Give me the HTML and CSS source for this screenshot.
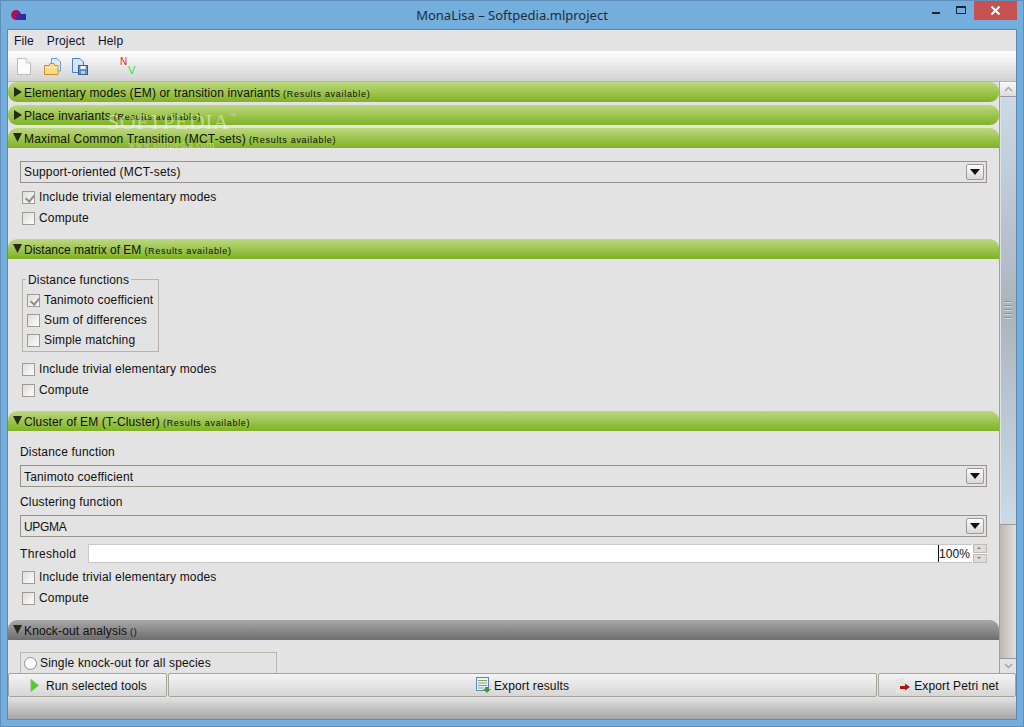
FILE: index.html
```html
<!DOCTYPE html>
<html lang="en">
<head>
<meta charset="utf-8">
<title>MonaLisa – Softpedia.mlproject</title>
<link rel="stylesheet" href="styles.css">
</head>
<body>
<div class="window">
  <header class="titlebar">
    <svg class="app-icon" width="16" height="12" viewBox="0 0 16 12"><defs><linearGradient id="lg1" x1="0" x2="1"><stop offset="0" stop-color="#c01050"/><stop offset="1" stop-color="#901060"/></linearGradient><linearGradient id="lg2" x1="0" x2="1"><stop offset="0" stop-color="#602090"/><stop offset="1" stop-color="#1830a8"/></linearGradient></defs><circle cx="5" cy="5" r="5" fill="url(#lg1)"/><rect x="5" y="4" width="10" height="6" fill="url(#lg2)"/></svg>
    <div class="title">MonaLisa – Softpedia.mlproject</div>
    <div class="controls">
      <div class="ctl"><span class="min"></span></div>
      <div class="ctl"><span class="max"></span></div>
      <div class="close"><svg width="11" height="9" viewBox="0 0 11 9"><path d="M1.500 .5l8 8M9.500 .5l-8 8" stroke="#fff" stroke-width="2"/></svg></div>
    </div>
  </header>
  <div class="client">
    <nav class="menubar"><span>File</span><span>Project</span><span>Help</span></nav>
    <div class="toolbar">
      <svg class="tool" width="16" height="17" viewBox="0 0 16 17"><path d="M1.500.5H10L14.500 5V16.500H1.500Z" fill="#fbfbfb" stroke="#bcbcbc"/><path d="M10 .5V5h4.500" fill="#ececec" stroke="#cfcfcf"/></svg>
      <svg class="tool t2" width="18" height="17" viewBox="0 0 18 17"><path d="M7.500.5H13L16.500 4V13H7.500Z" fill="#dbe9f8" stroke="#6f9bd0"/><path d="M.5 7.500H5L6 5.500H10L11 7.500H14V16.500H.5Z" fill="#fbd98a" stroke="#c98f30"/><path d="M1 9.500H13.500" stroke="#fff3c8"/></svg>
      <svg class="tool t3" width="17" height="17" viewBox="0 0 17 17"><path d="M.5.5H8L11.500 4V14.500H.5Z" fill="#d6e6fa" stroke="#4f7fc0"/><rect x="6.500" y="7.500" width="9" height="9" fill="#5d8fd0" stroke="#2f5f9f"/><rect x="8.500" y="8" width="5" height="3" fill="#fff"/><rect x="9" y="13" width="4" height="3" fill="#b5e08a"/></svg>
      <div class="nv"><span class="n">N</span><span class="v">V</span></div>
    </div>
    <div class="middle">
      <main class="content">
        <div class="bar"><span class="tri right"></span><span class="bar-t">Elementary modes (EM) or transition invariants</span><small>(Results available)</small></div>
        <div class="bar gap"><span class="tri right"></span><span class="bar-t">Place invariants</span><small>(Results available)</small></div>
        <div class="bar gap open"><span class="tri"></span><span class="bar-t wide">Maximal Common Transition (MCT-sets)</span><small>(Results available)</small></div>

        <section class="panel p-mct">
          <div class="combo"><span>Support-oriented (MCT-sets)</span><i class="drop"></i></div>
          <label class="check mt4"><i class="box on"></i>Include trivial elementary modes</label>
          <label class="check mt1"><i class="box"></i>Compute</label>
        </section>

        <div class="bar open"><span class="tri"></span><span class="bar-t narrow">Distance matrix of EM</span><small>(Results available)</small></div>
        <section class="panel p-dist">
          <fieldset class="group">
            <legend>Distance functions</legend>
            <label class="check"><i class="box on"></i>Tanimoto coefficient</label>
            <label class="check"><i class="box"></i>Sum of differences</label>
            <label class="check"><i class="box"></i>Simple matching</label>
          </fieldset>
          <label class="check mt7"><i class="box"></i>Include trivial elementary modes</label>
          <label class="check mt1"><i class="box"></i>Compute</label>
        </section>

        <div class="bar open"><span class="tri"></span><span class="bar-t">Cluster of EM (T-Cluster)</span><small>(Results available)</small></div>
        <section class="panel p-cluster">
          <div class="lbl">Distance function</div>
          <div class="combo"><span>Tanimoto coefficient</span><i class="drop"></i></div>
          <div class="lbl l2">Clustering function</div>
          <div class="combo"><span class="tight">UPGMA</span><i class="drop"></i></div>
          <div class="threshold">
            <span>Threshold</span>
            <div class="slider"><b>100%</b></div>
            <div class="spin"><i class="up"></i><i class="down"></i></div>
          </div>
          <label class="check mt4"><i class="box"></i>Include trivial elementary modes</label>
          <label class="check mt1"><i class="box"></i>Compute</label>
        </section>

        <div class="bar open grey"><span class="tri"></span><span class="bar-t">Knock-out analysis</span><small>()</small></div>
        <section class="panel p-ko">
          <div class="ko-box"><i class="radio"></i>Single knock-out for all species</div>
        </section>
        <div class="wm wm-main">SOFTPEDIA<sup>™</sup></div>
        <div class="wm wm-url">www.softpedia.com</div>
      </main>
      <aside class="scroll">
        <div class="sbtn"><svg width="9" height="6" viewBox="0 0 9 6"><path d="M1 5l3.500-3.500L8 5" fill="none" stroke="#a5a5a5" stroke-width="1.500"/></svg></div>
        <div class="thumb"><div class="grip"><i></i><i></i><i></i><i></i><i></i></div></div>
        <div class="track"></div>
        <div class="sbtn"><svg width="9" height="6" viewBox="0 0 9 6"><path d="M1 1l3.500 3.500L8 1" fill="none" stroke="#a5a5a5" stroke-width="1.500"/></svg></div>
      </aside>
    </div>
    <div class="actions">
      <button class="act a1"><svg width="10" height="13" viewBox="0 0 10 13"><path d="M1 .5L8.500 6.500 1 12.500Z" fill="#4fd020" stroke="#8ab878"/></svg><span>Run selected tools</span></button>
      <button class="act a2"><svg width="15" height="16" viewBox="0 0 15 16"><rect x=".5" y=".5" width="12" height="13" fill="#eef4fb" stroke="#5a86c0"/><path d="M2 3.500H11M2 6H11M2 8.500H11M2 11H8" stroke="#7aa858"/><path d="M9 10h4v2h2l-4 4-4-4h2z" fill="#3f9a3f"/></svg><span>Export results</span></button>
      <button class="act a3"><svg width="15" height="17" viewBox="0 0 15 17"><path d="M1 16.500V3L6 .5h2l6 16Z" fill="#e6e4df"/><path d="M5 9h5V6.500l5 3.500-5 3.500V12H5Z" fill="#b01818"/></svg><span>Export Petri net</span></button>
    </div>
    <div class="status"></div>
  </div>
</div>
</body>
</html>
```
FILE: styles.css
```css
* { box-sizing: border-box; }
html, body { margin: 0; height: 100%; }
body { font: 12px/14px "Liberation Sans", Arial, sans-serif; color: #101010; letter-spacing: .17px; }
.window { width: 1024px; height: 727px; background: #74aedc; display: flex; flex-direction: column; border: 1px solid #5f8fb8; overflow: hidden; }

.titlebar { height: 28px; flex: none; display: flex; align-items: flex-start; position: relative; }
.app-icon { margin: 9px 0 0 10px; }
.title { position: absolute; left: 0; right: 0; top: 6px; text-align: center; font: 13px/17px "Noto Sans", sans-serif; letter-spacing: 0; color: #222c38; }
.controls { margin-left: auto; display: flex; margin-right: 5px; position: relative; left: -1px; }
.ctl { width: 35px; height: 19px; position: relative; }
.min { position: absolute; left: 28px; top: 11px; width: 8px; height: 2px; background: #1d2630; }
.max { position: absolute; left: 17px; top: 5px; width: 10px; height: 8px; border: 1px solid #1d2630; border-top-width: 2px; }
.close { width: 43px; height: 19px; background: #c75050; display: flex; align-items: center; justify-content: center; }

.client { width: 1010px; margin-left: 6px; height: 691px; flex: none; border: 1px solid #5e88ae; display: flex; flex-direction: column; background: #e3e3e3; }
.menubar { height: 21px; flex: none; display: flex; gap: 13px; padding: 4px 0 0 6px; color: #101030; letter-spacing: .12px; }
.toolbar { height: 31px; flex: none; background: linear-gradient(#fff, #d2d2d2); border-bottom: 1px solid #b9b6b0; display: flex; align-items: flex-start; padding: 7px 0 0 8px; }
.t2 { margin-left: 12px; }
.t3 { margin-left: 10px; }
.nv { margin-left: 31px; margin-top: -1px; position: relative; width: 16px; height: 18px; font-size: 10px; line-height: 10px; }
.n { position: absolute; left: 0; top: 0; color: #e82020; }
.v { position: absolute; left: 8px; top: 8px; color: #30e040; font-size: 11px; }

.middle { height: 591px; flex: none; display: flex; }
.content { width: 991px; height: 591px; overflow: hidden; flex: none; position: relative; }
.bar { height: 20px; width: 991px; padding: 1px 0 0 5px; background: linear-gradient(#bcd87e, #80b224); border-radius: 9px; display: flex; align-items: center; white-space: nowrap; }
.bar.gap { margin-top: 3px; }
.bar.open { border-bottom-left-radius: 0; border-bottom-right-radius: 0; }
.bar.grey { background: linear-gradient(#a8a8a8, #6e6e6e); }
.bar-t { margin-left: 1px; letter-spacing: .13px; }
.bar-t.wide { letter-spacing: .2px; }
.bar-t.narrow { letter-spacing: 0; }
.bar small { font-size: 9px; letter-spacing: .7px; margin-left: 3px; padding-top: 2px; }
.tri { display: block; width: 9px; height: 9px; flex: none; margin-right: 1px; margin-top: -2px; background: #262a1c; clip-path: polygon(0 0, 100% 0, 50% 100%); }
.tri.right { width: 8px; height: 10px; margin: -1px 1px 0; clip-path: polygon(0 0, 100% 50%, 0 100%); }

.panel { padding: 0 12px; }
.p-mct { height: 91px; padding-top: 13px; }
.p-dist { height: 152px; padding-top: 13px; }
.p-cluster { height: 189px; padding-top: 14px; }
.p-ko { padding-top: 12px; }
.combo { height: 22px; width: 967px; border: 1px solid #989489; display: flex; align-items: center; justify-content: space-between; padding: 0 2px 0 3px; }
.p-cluster .combo span { margin-top: 2px; }
.tight { letter-spacing: -.3px; }
.drop { width: 18px; height: 16px; border: 1px solid #9a9a9a; border-radius: 2px; background: linear-gradient(#fdfdfd, #d8d8d8); position: relative; }
.drop::after { content: ""; position: absolute; left: 3px; top: 4px; border: 5px solid transparent; border-top: 6px solid #111; border-bottom: 0; }

.check { display: flex; align-items: center; height: 20px; gap: 4px; padding-left: 2px; }
.mt4 { margin-top: 4px; }
.mt7 { margin-top: 7px; }
.mt1 { margin-top: 1px; }
.box { width: 13px; height: 13px; flex: none; border: 1px solid #a09c94; background: linear-gradient(135deg, #dedcd8, #fdfdfd); position: relative; }
.box.on::after { content: ""; position: absolute; left: 3.500px; top: 1px; width: 4px; height: 7px; border: solid #8f8f8f; border-width: 0 2px 2px 0; transform: rotate(40deg); }
.group { width: 137px; height: 80px; margin: 0 0 0 2px; border: 1px solid #b8b2a8; padding: 4px 0 0 4px; min-width: 0; }
.group legend { padding: 0 2px; margin-left: -1px; line-height: 14px; position: relative; top: 1px; }
.group .check { padding: 0; }

.lbl { height: 14px; margin-bottom: 6px; }
.lbl.l2 { margin-top: 8px; margin-bottom: 6px; }
.threshold { display: flex; align-items: center; height: 19px; margin-top: 7px; }
.threshold > span { width: 68px; letter-spacing: .33px; }
.slider { width: 884px; height: 19px; background: #fff; border: 1px solid #c8c8c8; border-width: 1px 0 1px 1px; display: flex; justify-content: flex-end; }
.slider b { font-weight: normal; border-left: 1px solid #111; width: 34px; height: 17px; line-height: 18px; text-align: right; padding-right: 2px; letter-spacing: .1px; }
.spin { width: 15px; height: 19px; background: #fff; display: flex; flex-direction: column; gap: 1px; padding: 0 0 0 1px; }
.spin i { flex: 1; background: #dcdcdc; border: 1px solid #c0bcb4; position: relative; }
.spin i::after { content: ""; position: absolute; left: 3px; top: 2px; border: 2px solid transparent; }
.spin .up::after { border-bottom: 2px solid #808080; border-top: 0; }
.spin .down::after { border-top: 2px solid #808080; border-bottom: 0; }
.ko-box { width: 257px; height: 21px; border: 1px solid #bcb6aa; border-bottom: 0; display: flex; align-items: center; gap: 3px; padding-left: 3px; }
.radio { width: 13px; height: 13px; border-radius: 50%; background: #fff; border: 1px solid #8e8e8e; flex: none; }

.wm { position: absolute; color: rgba(255, 255, 255, .45); font-family: "Liberation Serif", serif; white-space: nowrap; pointer-events: none; }
.wm-main { left: 99px; top: 29px; font-size: 22px; line-height: 22px; letter-spacing: .4px; }
.wm-main sup { font-size: 7px; line-height: 0; vertical-align: 11px; }
.wm-url { left: 120px; top: 58px; font-size: 10px; line-height: 10px; letter-spacing: .4px; }

.scroll { width: 17px; flex: none; border-left: 1px solid #a0a0a0; display: flex; flex-direction: column; }
.sbtn { height: 15px; flex: none; display: flex; align-items: center; justify-content: center; background: linear-gradient(#fafafa, #dcdcdc); border-bottom: 1px solid #9a9a9a; }
.sbtn:last-child { border-bottom: 0; border-top: 1px solid #9a9a9a; background: #e3e3e3; }
.thumb { height: 428px; flex: none; background: linear-gradient(#ccdae6, #b3bcc6 40%, #aab4bd 50%, #b8c4ce 70%, #ccdae6); box-shadow: inset 1px 0 #dce4ea; display: flex; align-items: center; justify-content: center; border-bottom: 1px solid #9a9a9a; }
.grip i { display: block; width: 8px; height: 1px; background: #8a96a0; margin-bottom: 3px; box-shadow: 0 1px 0 #ccd4da; }
.track { flex: 1; background: linear-gradient(90deg, #bcb8b0, #e2e0dc); }

.actions { height: 24px; flex: none; display: flex; gap: 1px; }
.act { font: inherit; letter-spacing: .12px; color: #101010; height: 24px; background: linear-gradient(#f4f4f4, #d6d6d6); border: 1px solid #a8a49c; border-radius: 2px; display: flex; align-items: center; padding: 0; }
.act span { margin-top: 2px; }
.a1 { width: 159px; padding-left: 21px; gap: 6px; }
.a2 { width: 709px; justify-content: center; gap: 3px; }
.a3 { width: 138px; justify-content: center; gap: 4px; }
.status { flex: 1; background: linear-gradient(#e2e2e2, #a6a6a6); }
```
